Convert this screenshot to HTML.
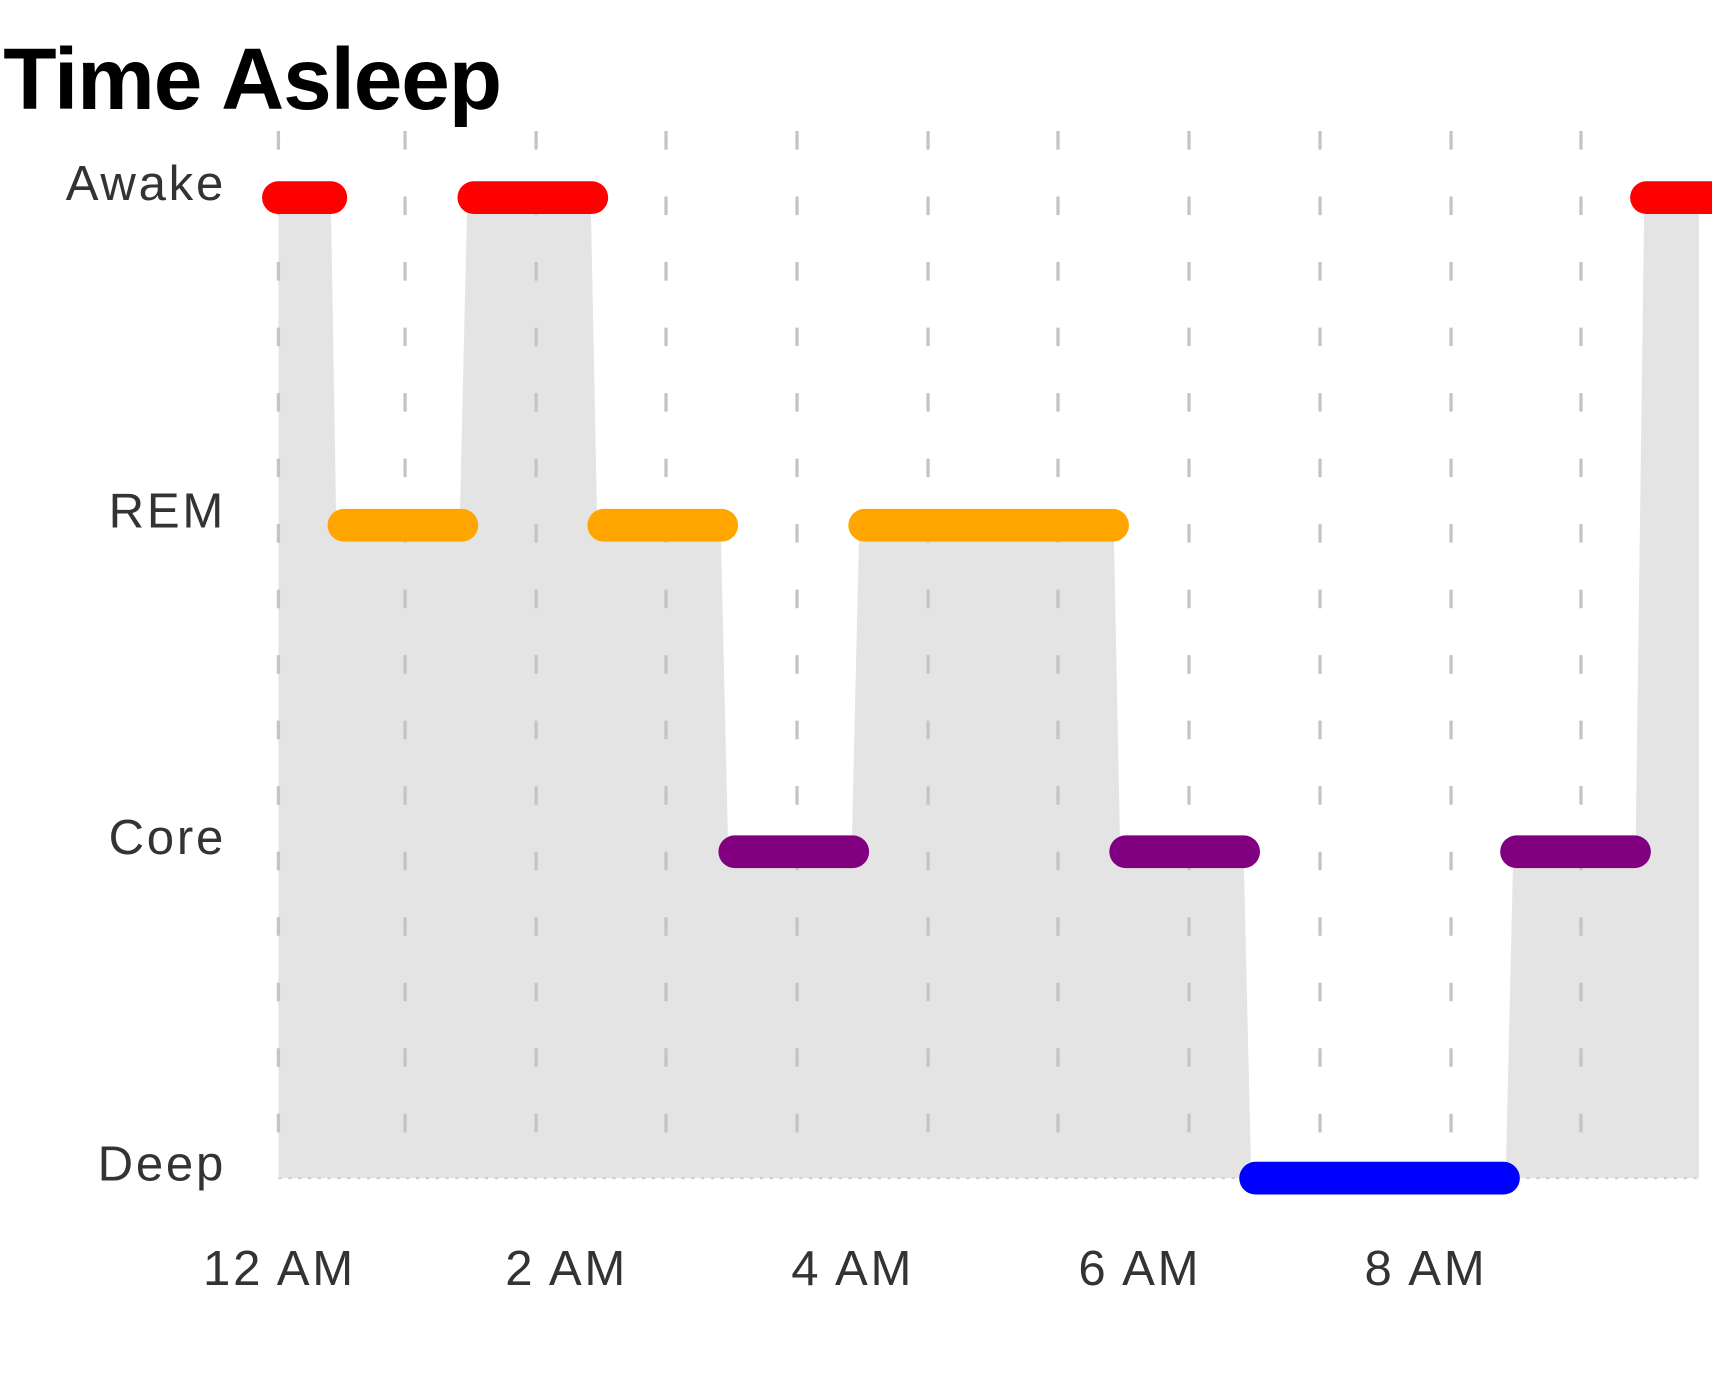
<!DOCTYPE html>
<html><head><meta charset="utf-8"><style>
html,body{margin:0;padding:0;background:#fff;width:1712px;height:1378px;overflow:hidden}
svg{display:block}
</style></head><body>
<svg width="1712" height="1378" viewBox="0 0 1568 1262" preserveAspectRatio="none" xmlns="http://www.w3.org/2000/svg">
<text x="3" y="100" font-family="Liberation Sans, sans-serif" font-weight="bold" font-size="80" fill="#000" letter-spacing="-1">Time Asleep</text>
<polygon fill="#e4e4e4" points="255,1079 255,181 303,181 308,481 421,481 428,181 541,181 547,481 660,481 667,780 780,780 787,481 1020,481 1026,780 1139,780 1146,1079 1379,1079 1386,780 1498,780 1506,181 1556,181 1556,1079"/>
<g stroke="#c4c4c4" stroke-width="3" stroke-dasharray="17 43">
<line x1="255" y1="120" x2="255" y2="1079"/>
<line x1="371" y1="120" x2="371" y2="1079"/>
<line x1="491" y1="120" x2="491" y2="1079"/>
<line x1="610" y1="120" x2="610" y2="1079"/>
<line x1="730" y1="120" x2="730" y2="1079"/>
<line x1="850" y1="120" x2="850" y2="1079"/>
<line x1="969" y1="120" x2="969" y2="1079"/>
<line x1="1089" y1="120" x2="1089" y2="1079"/>
<line x1="1209" y1="120" x2="1209" y2="1079"/>
<line x1="1329" y1="120" x2="1329" y2="1079"/>
<line x1="1448" y1="120" x2="1448" y2="1079"/>
</g>
<line x1="255" y1="1079" x2="1556" y2="1079" stroke="#cfcfcf" stroke-width="2" stroke-dasharray="3 6"/>
<g stroke-linecap="round" stroke-width="30">
<line x1="255" y1="181" x2="303" y2="181" stroke="#ff0000"/>
<line x1="434" y1="181" x2="542" y2="181" stroke="#ff0000"/>
<line x1="1508" y1="181" x2="1568" y2="181" stroke="#ff0000"/>
<line x1="315" y1="481" x2="423" y2="481" stroke="#ffa500"/>
<line x1="553" y1="481" x2="661" y2="481" stroke="#ffa500"/>
<line x1="792" y1="481" x2="1019" y2="481" stroke="#ffa500"/>
<line x1="673" y1="780" x2="781" y2="780" stroke="#800080"/>
<line x1="1031" y1="780" x2="1139" y2="780" stroke="#800080"/>
<line x1="1389" y1="780" x2="1497" y2="780" stroke="#800080"/>
<line x1="1150" y1="1079" x2="1377" y2="1079" stroke="#0000ff"/>
</g>
<g font-family="Liberation Sans, sans-serif" font-size="45" fill="#333" letter-spacing="2.5">
<g text-anchor="end">
<text x="207" y="183">Awake</text>
<text x="207" y="483">REM</text>
<text x="207" y="782">Core</text>
<text x="207" y="1081">Deep</text>
</g>
<g text-anchor="middle">
<text x="256" y="1177">12 AM</text>
<text x="519" y="1177">2 AM</text>
<text x="781" y="1177">4 AM</text>
<text x="1044" y="1177">6 AM</text>
<text x="1306" y="1177">8 AM</text>
</g>
</g>
</svg>
</body></html>
